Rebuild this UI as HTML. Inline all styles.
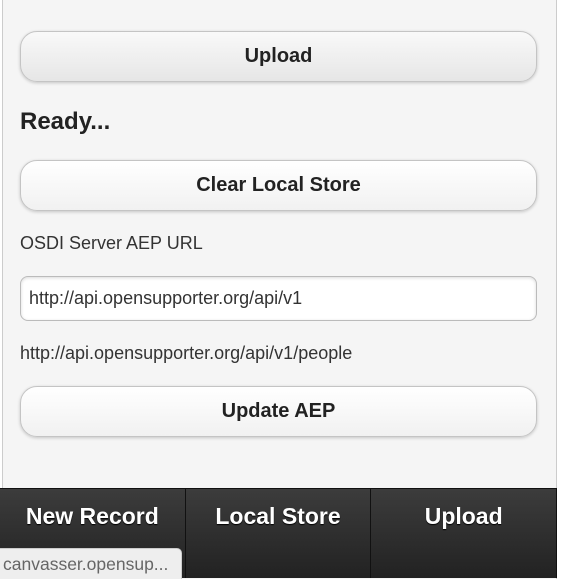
<!DOCTYPE html>
<html><head><style>
html,body{margin:0;padding:0;width:561px;height:579px;overflow:hidden;background:#fff;font-family:"Liberation Sans",Arial,sans-serif}
.page{position:absolute;left:2px;top:0;width:553px;height:579px;background:#f5f5f5;border-left:1px solid #ccc;border-right:1px solid #ccc}
.btn{position:absolute;left:20px;width:515px;height:49px;border:1px solid #c4c4c4;border-radius:17px;box-shadow:0 1px 3px rgba(0,0,0,.2);font-weight:bold;font-size:20px;color:#222;text-align:center;line-height:49px;background:linear-gradient(#fff,#f1f1f1)}
.btn.up{background:linear-gradient(#f9f9f9,#e6e6e6)}
.t{position:absolute;left:20px;color:#333}
.inp{position:absolute;left:20px;top:276px;width:507px;height:43px;border:1px solid #bbb;border-radius:8px;background:#fff;box-shadow:inset 0 1px 3px rgba(0,0,0,.15);font-size:18px;color:#333;line-height:43px;padding-left:8px}
.foot{position:absolute;left:0;top:488px;width:557px;height:89px;background:linear-gradient(#3c3c3c,#222);border-top:1px solid #111;display:flex}
.foot div{flex:1;color:#fff;font-weight:bold;font-size:23px;text-align:center;padding-top:14px;border-right:1px solid #111;text-shadow:0 1px 1px #000}
.status{position:absolute;left:0;top:548px;width:182px;height:31px;background:#eee;border:1px solid #ccc;border-left:none;border-bottom:none;border-top-right-radius:5px;color:#666;font-size:17.5px;line-height:31px;padding-left:3px;box-sizing:border-box;white-space:nowrap}
</style></head><body>
<div class="page"></div>
<div class="btn up" style="top:31px">Upload</div>
<div class="t" style="top:108px;font-size:24px;font-weight:bold;color:#222">Ready...</div>
<div class="btn" style="top:160px">Clear Local Store</div>
<div class="t" style="top:233px;font-size:18px">OSDI Server AEP URL</div>
<div class="inp">http://api.opensupporter.org/api/v1</div>
<div class="t" style="top:343px;font-size:18px">http://api.opensupporter.org/api/v1/people</div>
<div class="btn" style="top:386px">Update AEP</div>
<div class="foot"><div>New Record</div><div>Local Store</div><div>Upload</div></div>
<div class="status">canvasser.opensup...</div>
</body></html>
